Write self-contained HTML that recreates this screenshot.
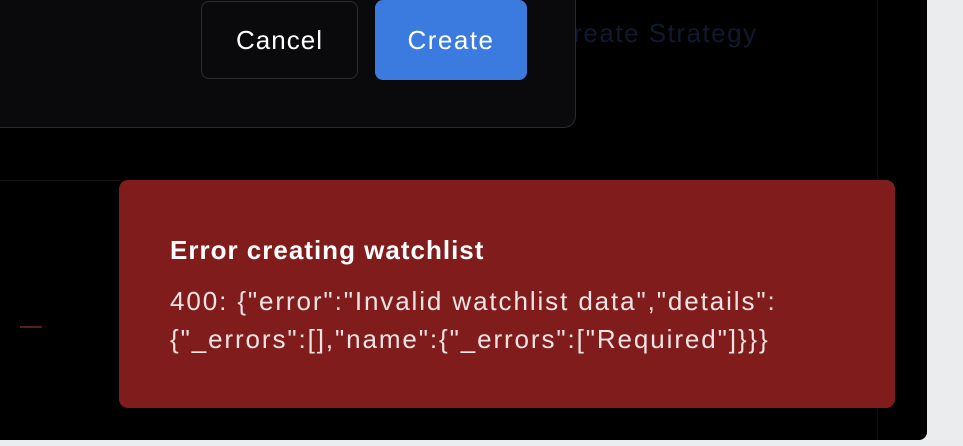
<!DOCTYPE html>
<html><head><style>
body{margin:0;width:963px;height:446px;background:#ebecee;overflow:hidden;font-family:"Liberation Sans",sans-serif;position:relative}
.main{position:absolute;left:0;top:0;width:927px;height:440px;background:#000;border-bottom-right-radius:8px}
.vl{position:absolute;left:877px;top:0;width:1px;height:440px;background:#0b0b0d}
.hl{position:absolute;left:0;top:180px;width:120px;height:1px;background:#141416}
.strat{position:absolute;left:567px;top:18px;font-size:26px;letter-spacing:1.5px;color:#0f1a2e;white-space:nowrap;width:220px;overflow:hidden}
.strat span{margin-left:-14px}
.modal{position:absolute;left:-20px;top:-20px;width:596px;height:148px;background:#0a0a0c;border:1px solid #2a2a2c;border-radius:12px;box-sizing:border-box}
.btn{position:absolute;box-sizing:border-box;border-radius:8px;color:#fff;font-size:26px;letter-spacing:1px;display:flex;align-items:center;justify-content:center}
.cancel{left:201px;top:1px;width:157px;height:78px;border:1px solid #2c2c2e;background:#0a0a0c}
.create{left:375px;top:0;width:152px;height:80px;background:#3b7be0;letter-spacing:1.5px}
.toast{position:absolute;left:119px;top:180px;width:776px;height:228px;background:#801c1c;border-radius:9px;color:#fff}
.t1{position:absolute;left:51px;top:55px;font-size:26px;letter-spacing:1px;font-weight:bold;white-space:nowrap}
.t2{position:absolute;left:51px;top:102px;font-size:26px;letter-spacing:1.9px;line-height:38px;color:#f1e3e3;white-space:nowrap}
.dash{position:absolute;left:20px;top:326px;width:22px;height:2px;background:#5a1a1e}
</style></head><body>
<div class="main"></div>
<div class="vl"></div>
<div class="hl"></div>
<div class="strat"><span>Create Strategy</span></div>
<div class="modal"></div>
<div class="btn cancel">Cancel</div>
<div class="btn create">Create</div>
<div class="dash"></div>
<div class="toast">
<div class="t1">Error creating watchlist</div>
<div class="t2">400: {"error":"Invalid watchlist data","details":<br>{"_errors":[],"name":{"_errors":["Required"]}}}</div>
</div>
</body></html>
